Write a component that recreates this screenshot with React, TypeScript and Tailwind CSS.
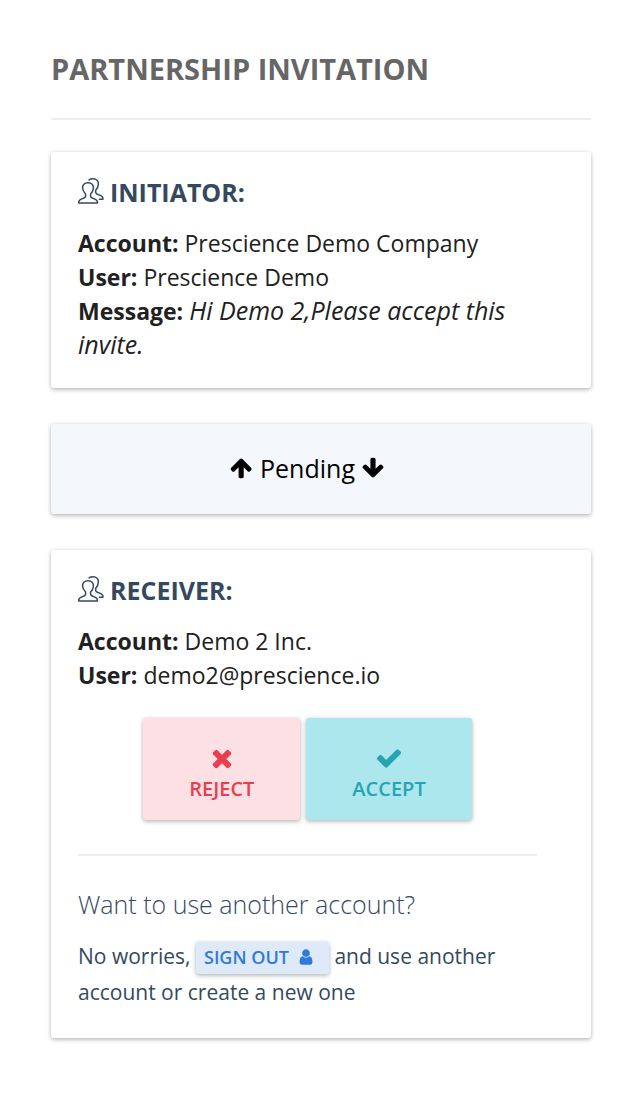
import React from 'react';

interface IconProps {
  className?: string;
}

interface SolidIconProps extends IconProps {
  path: string;
}

const PATHS = {
  arrowUp: 'M1611 971q0 51-37 90l-75 75q-38 38-91 38-54 0-90-38l-294-293v704q0 52-37.5 84.5t-90.5 32.5h-128q-53 0-90.5-32.5t-37.5-84.5v-704l-294 293q-36 38-90 38t-90-38l-75-75q-38-38-38-90 0-53 38-91l651-651q35-37 90-37 54 0 91 37l651 651q37 39 37 91z',
  arrowDown: 'M1675 832q0 53-37 90l-651 652q-39 37-91 37-53 0-90-37l-651-652q-38-36-38-90 0-53 38-91l74-75q39-37 91-37 53 0 90 37l294 294v-704q0-52 38-90t90-38h128q52 0 90 38t38 90v704l294-294q37-37 90-37 52 0 91 37l75 75q37 39 37 91z',
  times: 'M1490 1322q0 40-28 68l-136 136q-28 28-68 28t-68-28l-294-294-294 294q-28 28-68 28t-68-28l-136-136q-28-28-28-68t28-68l294-294-294-294q-28-28-28-68t28-68l136-136q28-28 68-28t68 28l294 294 294-294q28-28 68-28t68 28l136 136q28 28 28 68t-28 68l-294 294 294 294q28 28 28 68z',
  check: 'M1671 566q0 40-28 68l-724 724-136 136q-28 28-68 28t-68-28l-136-136-362-362q-28-28-28-68t28-68l136-136q28-28 68-28t68 28l294 295 656-657q28-28 68-28t68 28l136 136q28 28 28 68z',
  user: 'M1536 1399q0 109-62.5 187t-150.5 78h-854q-88 0-150.5-78t-62.5-187q0-85 8.5-160.5t31.5-152 58.5-131 94-89 134.5-34.5q131 128 313 128t313-128q76 0 134.5 34.5t94 89 58.5 131 31.5 152 8.5 160.5zm-256-887q0 159-112.5 271.5t-271.5 112.5-271.5-112.5-112.5-271.5 112.5-271.5 271.5-112.5 271.5 112.5 112.5 271.5z',
};

const SolidIcon: React.FC<SolidIconProps> = ({ path, className }) => (
  <svg viewBox="0 0 1792 1792" fill="currentColor" aria-hidden="true" className={className}>
    <path d={path} />
  </svg>
);

const UsersIcon: React.FC<IconProps> = ({ className }) => (
  <svg
    viewBox="0 0 26 26"
    fill="none"
    stroke="currentColor"
    strokeWidth="1.5"
    strokeLinecap="round"
    strokeLinejoin="round"
    aria-hidden="true"
    className={className}
  >
    <path d="M10 4.7C6.4 4.7 4.4 6.8 4.6 10.2C4.8 13 6.2 14.6 7.6 16V18.2C7.6 20.8 .8 20.6 .8 23.8V25H19.4V23.8C19.4 20.6 12.6 20.8 12.6 18.2V16C14 14.6 15.2 13 15.4 10.2C15.6 6.8 13.6 4.7 10 4.7Z" />
    <path d="M11.1 1.9C12.1 1.1 13.2 .8 14.8 .8C18.6 .8 20.6 3 20.4 6.3C20.2 9.1 19.1 10.9 17.7 12.3V14.4C17.7 17 24.9 16.8 24.9 20V21.2H21.4" />
  </svg>
);

interface CardTitleProps {
  children: React.ReactNode;
}

const CardTitle: React.FC<CardTitleProps> = ({ children }) => (
  <h2 className="flex items-center gap-1.5 text-[25px] leading-9 font-bold uppercase text-[#34495e]">
    <UsersIcon className="w-[26px] h-[26px] mb-0.5 shrink-0" />
    {children}
  </h2>
);

const cardShadow = 'rounded-[3px] shadow-[0_2px_4px_rgba(0,0,0,0.22),0_0_4px_rgba(0,0,0,0.1)]';

const App: React.FC = () => {
  return (
    <main className="px-[51px] pt-12 pb-16 bg-white font-['Open_Sans',sans-serif] text-[#212121]">
      <h1 className="text-[29px] leading-[42px] font-bold uppercase text-[#666666]">Partnership Invitation</h1>
      <hr className="mt-7 mb-8 border-t-2 border-[#eeeeee]" />

      {/* Initiator */}
      <section className={`bg-white pl-[27px] pr-[54px] pt-[22px] pb-[26px] ${cardShadow}`}>
        <CardTitle>Initiator:</CardTitle>
        <div className="mt-4 text-[23px] leading-[34px]">
          <p><strong>Account:</strong> Prescience Demo Company</p>
          <p><strong>User:</strong> Prescience Demo</p>
          <p><strong>Message:</strong> <em className="text-[25px] leading-none">Hi Demo 2,Please accept this invite.</em></p>
        </div>
      </section>

      {/* Status */}
      <section className={`mt-9 pl-[27px] pr-[54px] pt-[27px] pb-[29px] bg-[#f4f8fd] flex items-center justify-center gap-1.5 text-[25px] leading-[34px] text-black ${cardShadow}`}>
        <SolidIcon path={PATHS.arrowUp} className="w-6 h-6" />
        <span>Pending</span>
        <SolidIcon path={PATHS.arrowDown} className="w-6 h-6" />
      </section>

      {/* Receiver */}
      <section className={`mt-9 bg-white pl-[27px] pr-[54px] pt-[22px] pb-7 ${cardShadow}`}>
        <CardTitle>Receiver:</CardTitle>
        <div className="mt-4 text-[23px] leading-[34px]">
          <p><strong>Account:</strong> Demo 2 Inc.</p>
          <p><strong>User:</strong> demo2@prescience.io</p>
        </div>

        <div className="mt-[26px] flex justify-center gap-1.5 text-xl leading-[30px] font-semibold">
          <button type="button" className={`flex flex-col items-center gap-0.5 px-[46px] pt-[26px] pb-4 bg-[#fce0e4] text-[#e93e4e] uppercase ${cardShadow}`}>
            <SolidIcon path={PATHS.times} className="w-7 h-7" />
            Reject
          </button>
          <button type="button" className={`flex flex-col items-center gap-0.5 px-[46px] pt-[26px] pb-4 bg-[#abe7ed] text-[#27a4b0] uppercase ${cardShadow}`}>
            <SolidIcon path={PATHS.check} className="w-7 h-7" />
            Accept
          </button>
        </div>

        <hr className="mt-[34px] border-t-2 border-[#eeeeee]" />

        <div className="text-[#34495e]">
          <h3 className="mt-[31px] text-[25px] leading-[34px] font-light">Want to use another account?</h3>
          <p className="mt-[17px] text-[21px] leading-9">
            No worries,{' '}
            <button type="button" className={`inline-flex items-center gap-2 h-8 pl-2 pr-3.5 pb-0.5 bg-[#dfeaf8] text-[#327ad9] text-lg font-semibold uppercase align-middle ${cardShadow}`}>
              Sign out
              <SolidIcon path={PATHS.user} className="w-[18px] h-[18px]" />
            </button>{' '}
            and use another account or create a new one
          </p>
        </div>
      </section>
    </main>
  );
};

export default App;
